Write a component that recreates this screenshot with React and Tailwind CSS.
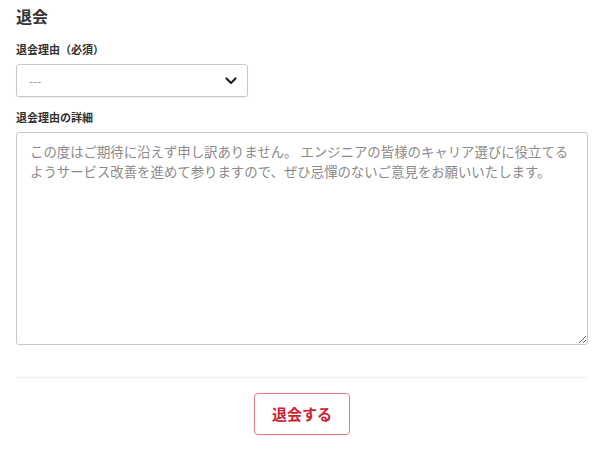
import React from "react";

const jp = { fontFamily: '"Noto Sans CJK JP", "Noto Sans", sans-serif' };

const App = () => {
    return (
        <div className="w-[604px] h-[450px] bg-white px-4 pt-[4px] text-[#333]" style={jp}>
            <h2 className="text-[16px] font-bold leading-[24px] text-[#333]">退会</h2>

            <div className="mt-[13px]">
                <label className="block text-[11px] font-bold leading-[16px]">退会理由（必須）</label>
                <div className="relative mt-[7px] w-[232px] h-[33px] border border-[#c8c8c8] rounded-[3px] flex items-center px-3 shadow-[0_1px_1px_rgba(0,0,0,0.08)]">
                    <span className="text-[12px] text-[#999]">---</span>
                    <svg className="absolute right-[10px] top-[11px]" width="12" height="10" viewBox="0 0 12 10">
                        <path d="M1.5 2.5 L6 7 L10.5 2.5" fill="none" stroke="#222" strokeWidth="2.2" strokeLinecap="round" strokeLinejoin="round" />
                    </svg>
                </div>
            </div>

            <div className="mt-[12px]">
                <label className="block text-[11px] font-bold leading-[16px]">退会理由の詳細</label>
                <textarea
                    className="mt-[7px] block w-full h-[213px] border border-[#c8c8c8] rounded-[3px] pl-[13px] pr-[16px] py-[8px] text-[13.4px] leading-[20px] placeholder:text-[#8a8a8a] outline-none"
                    style={jp}
                    placeholder="この度はご期待に沿えず申し訳ありません。 エンジニアの皆様のキャリア選びに役立てるようサービス改善を進めて参りますので、ぜひ忌憚のないご意見をお願いいたします。"
                />
            </div>

            <div className="mt-[32px] border-t border-[#eeeeee]" />

            <div className="flex justify-center mt-[15px]">
                <button className="w-[96px] h-[42px] border border-[#e57c84] rounded-[4px] text-[#d0212f] text-[15px] font-bold bg-white">
                    退会する
                </button>
            </div>
        </div>
    );
};

export default App;
